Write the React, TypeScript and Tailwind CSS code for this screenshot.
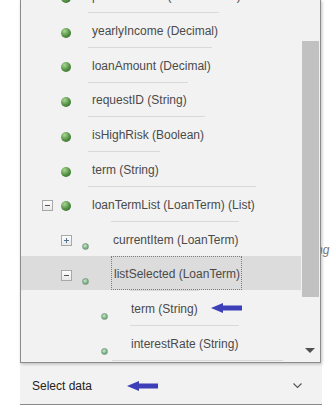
import React from 'react';
import clsx from 'clsx';

type TreeNode = {
  label: string;
  level: 1 | 2 | 3;
  expander?: 'plus' | 'minus';
  selected?: boolean;
  arrow?: boolean;
};

const nodes: TreeNode[] = [
  { label: 'previousLoan (LoanRecord)', level: 1 },
  { label: 'yearlyIncome (Decimal)', level: 1 },
  { label: 'loanAmount (Decimal)', level: 1 },
  { label: 'requestID (String)', level: 1 },
  { label: 'isHighRisk (Boolean)', level: 1 },
  { label: 'term (String)', level: 1 },
  { label: 'loanTermList (LoanTerm) (List)', level: 1, expander: 'minus' },
  { label: 'currentItem (LoanTerm)', level: 2, expander: 'plus' },
  { label: 'listSelected (LoanTerm)', level: 2, expander: 'minus', selected: true },
  { label: 'term (String)', level: 3, arrow: true },
  { label: 'interestRate (String)', level: 3 },
];

const BlueArrow = () => (
  <svg width="31" height="10" viewBox="0 0 31 10">
    <polygon points="0,5 12,0 12,10" fill="#3d3fb8" />
    <rect x="11" y="2.5" width="20" height="5" fill="#3d3fb8" />
  </svg>
);

const Expander = ({ type }: { type: 'plus' | 'minus' }) => (
  <svg width="11" height="11" viewBox="0 0 11 11">
    <defs>
      <linearGradient id="expfill" x1="0" y1="0" x2="0" y2="1">
        <stop offset="0" stopColor="#ffffff" />
        <stop offset="1" stopColor="#e6e6e6" />
      </linearGradient>
    </defs>
    <rect x="0.5" y="0.5" width="10" height="10" fill="url(#expfill)" stroke="#a8a8a8" />
    <line x1="3" y1="5.5" x2="8" y2="5.5" stroke={type === 'plus' ? '#55708e' : '#555555'} />
    {type === 'plus' && <line x1="5.5" y1="3" x2="5.5" y2="8" stroke="#55708e" />}
  </svg>
);

const Row = ({ node }: { node: TreeNode }) => {
  const isTop = node.level === 1;
  return (
    <div
      className={clsx(
        'flex h-[34.8px] items-start',
        node.selected && 'bg-[#dcdcdc]',
        node.level === 1 && 'pl-[21px]',
        node.level === 2 && 'pl-[40px]',
        node.level === 3 && 'pl-[59px]'
      )}
    >
      <div className="mt-[14.5px] h-[11px] w-[11px] shrink-0">
        {node.expander && <Expander type={node.expander} />}
      </div>
      {isTop ? (
        <span className="ml-[8px] mt-[15.5px] h-[10px] w-[10px] shrink-0 rounded-full bg-[radial-gradient(circle_at_35%_30%,#a9d694,#4f8f40_55%,#2d5b25)]" />
      ) : (
        <span className="ml-[10px] mt-[22.5px] h-[7px] w-[7px] shrink-0 rounded-full border border-[#7f9c86] bg-[radial-gradient(circle_at_40%_35%,#c9ecce,#6fae79_65%,#4f8159)]" />
      )}
      <div
        className={clsx(
          'flex h-full shrink-0 items-center whitespace-nowrap pt-[2px] pr-[1px] text-[12px] text-[#4a4a4a]',
          isTop ? 'ml-[17px] pl-[4px]' : 'ml-[22px]',
          node.level === 2 && 'pl-[2px]',
          node.level === 3 && 'pl-[1px]',
          node.selected ? 'border border-dotted border-[#5b84b1]' : 'border-t border-[#d9d9d9]'
        )}
      >
        {node.label}
      </div>
      {node.arrow && (
        <div className="ml-[12px] mt-[12.6px]">
          <BlueArrow />
        </div>
      )}
    </div>
  );
};

export default function App() {
  return (
    <div className="relative h-[414px] w-[333px] overflow-hidden bg-white font-['Liberation_Sans',Arial,sans-serif]">
      {/* text of the page under the dropdown */}
      <span className="absolute left-[316px] top-[243px] text-[12px] italic leading-[14px] text-[#777]">ng</span>

      <div className="relative z-10 ml-[20px] flex h-[363px] w-[301px] overflow-hidden border-x border-b border-[#8c8c8c] bg-[#f2f2f2] shadow-[1px_1px_3px_rgba(0,0,0,0.25)]">
        <div className="flex-1 overflow-hidden">
          <div className="mt-[-22.8px]">
            {nodes.map((n, i) => (
              <Row key={i} node={n} />
            ))}
            {/* next item, only its top line shows */}
            <div className="ml-[91px] h-[2px] w-[171px] border-t border-[#d9d9d9]" />
          </div>
        </div>
        <div className="flex w-[19px] shrink-0 flex-col">
          <div className="ml-[1px] mt-[41px] h-[256px] w-[17px] bg-[#c1c1c1]" />
          <svg className="mb-[9px] ml-[4px] mt-auto" width="10" height="5" viewBox="0 0 10 5">
            <polygon points="0,0 10,0 5,5" fill="#505050" />
          </svg>
        </div>
      </div>

      <div className="ml-[20px] flex h-[42px] w-[302px] items-center justify-between border-b border-[#8a8a8a] bg-[#f2f2f2] pl-[12px] pr-[20px] pt-[5px]">
        <div className="flex items-center">
          <span className="text-[12px] text-[#222]">Select data</span>
          <div className="ml-[35px]">
            <BlueArrow />
          </div>
        </div>
        <svg width="9" height="6" viewBox="0 0 9 6">
          <polyline points="0.5,0.5 4.5,4.5 8.5,0.5" fill="none" stroke="#555" strokeWidth="1.1" />
        </svg>
      </div>
    </div>
  );
}
